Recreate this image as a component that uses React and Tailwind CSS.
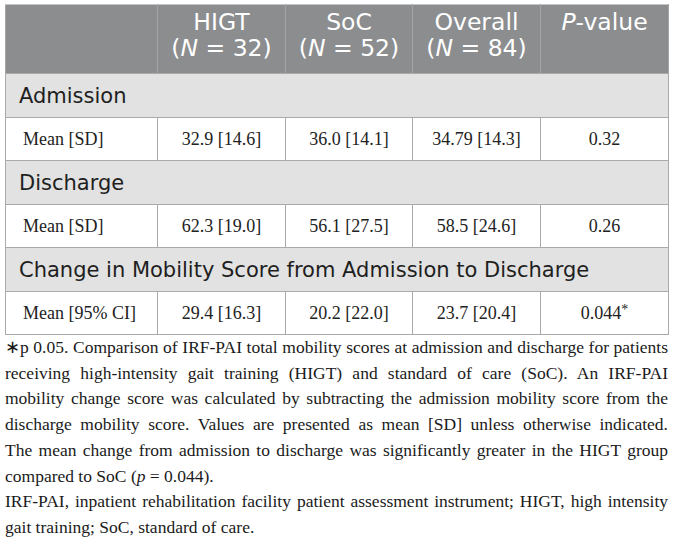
import React from "react";

function SectionRow({ label }) {
  return (
    <tr className="bg-[#e1e2e1] h-[44px]">
      <td colSpan={5} className="border border-[#a9aaab] pl-[13px] pt-[3px] text-[21px] text-[#1e1e1e] align-middle font-['DejaVu_Sans',sans-serif]">
        {label}
      </td>
    </tr>
  );
}

function DataRow({ cells }) {
  return (
    <tr className="bg-white h-[43px]">
      {cells.map((c, i) => (
        <td
          key={i}
          className={
            "border border-[#a9aaab] align-middle text-[18px] text-[#222] " +
            (i === 0 ? "text-left pl-[17px]" : "text-center")
          }
        >
          {c}
        </td>
      ))}
    </tr>
  );
}

function Line({ children, last }) {
  return (
    <span
      className={
        "block whitespace-nowrap " +
        (last ? "text-left" : "text-justify [text-align-last:justify]")
      }
    >
      {children}
    </span>
  );
}

export default function App() {
  return (
    <div className="w-[673px] h-[538px] bg-white pt-[4px] px-[5px] font-['Liberation_Serif',serif] overflow-hidden">
      <table className="table-fixed border-collapse w-[663px] border border-[#c4c5c6]">
        <colgroup>
          <col className="w-[152px]" />
          <col className="w-[128px]" />
          <col className="w-[127px]" />
          <col className="w-[128px]" />
          <col className="w-[128px]" />
        </colgroup>
        <thead>
          <tr className="bg-[#8b8d8f] h-[69px] text-white font-['DejaVu_Sans',sans-serif] text-[23.5px] leading-[26px]">
            <th className="border-x border-[#a3a5a7] border-t border-t-[#c4c5c6]"></th>
            <th className="border-x border-[#a3a5a7] font-normal align-top pt-[4px]">
              HIGT
              <br />(<i>N</i> = 32)
            </th>
            <th className="border-x border-[#a3a5a7] font-normal align-top pt-[4px]">
              SoC
              <br />(<i>N</i> = 52)
            </th>
            <th className="border-x border-[#a3a5a7] font-normal align-top pt-[4px]">
              Overall
              <br />(<i>N</i> = 84)
            </th>
            <th className="border-x border-[#a3a5a7] font-normal align-top pt-[4px]">
              <i>P</i>-value
            </th>
          </tr>
        </thead>
        <tbody>
          <SectionRow label="Admission" />
          <DataRow cells={["Mean [SD]", "32.9 [14.6]", "36.0 [14.1]", "34.79 [14.3]", "0.32"]} />
          <SectionRow label="Discharge" />
          <DataRow cells={["Mean [SD]", "62.3 [19.0]", "56.1 [27.5]", "58.5 [24.6]", "0.26"]} />
          <SectionRow label="Change in Mobility Score from Admission to Discharge" />
          <DataRow
            cells={[
              "Mean [95% CI]",
              "29.4 [16.3]",
              "20.2 [22.0]",
              "23.7 [20.4]",
              <span key="p">
                0.044<span className="text-[14px] relative top-[-5px]">*</span>
              </span>,
            ]}
          />
        </tbody>
      </table>
      <div className="text-[17.5px] leading-[25.7px] text-[#1a1a1a]">
        <p>
          <Line>∗p 0.05. Comparison of IRF-PAI total mobility scores at admission and discharge for patients</Line>
          <Line>receiving high-intensity gait training (HIGT) and standard of care (SoC). An IRF-PAI</Line>
          <Line>mobility change score was calculated by subtracting the admission mobility score from the</Line>
          <Line>discharge mobility score. Values are presented as mean [SD] unless otherwise indicated.</Line>
          <Line>The mean change from admission to discharge was significantly greater in the HIGT group</Line>
          <Line last>
            compared to SoC (<i>p</i> = 0.044).
          </Line>
        </p>
        <p>
          <Line>IRF-PAI, inpatient rehabilitation facility patient assessment instrument; HIGT, high intensity</Line>
          <Line last>gait training; SoC, standard of care.</Line>
        </p>
      </div>
    </div>
  );
}
